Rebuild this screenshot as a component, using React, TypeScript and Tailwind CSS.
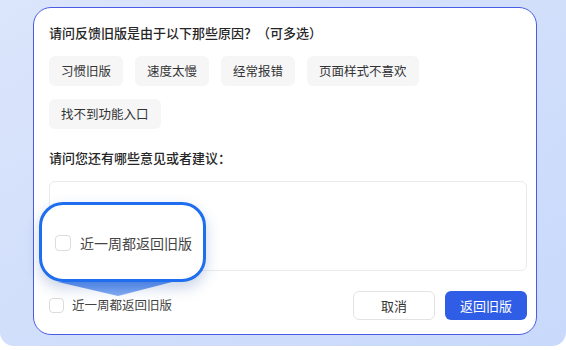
import React from "react";

const reasons = ["习惯旧版", "速度太慢", "经常报错", "页面样式不喜欢", "找不到功能入口"];

const Checkbox = ({ size = "w-[15px] h-[15px]" }: { size?: string }) => (
  <span className={`${size} shrink-0 rounded-[4px] border border-[#dcdcdc] bg-white`}></span>
);

export default function App() {
  return (
    <div
      className="w-[566px] h-[350px] bg-white overflow-hidden"
      style={{ fontFamily: '"Noto Sans CJK SC", "Noto Sans", sans-serif' }}
    >
      <div className="h-[346px] rounded-b-[14px] bg-gradient-to-br from-[#dbe5fb] to-[#c8d9fb] pt-[7px] pl-[33px]">
        {/* Card */}
        <div className="relative w-[504px] h-[328px] rounded-[18px] border-[1.5px] border-[#4a5ce6] bg-white pl-[15px] pr-[9px] pt-[16px]">
          <div className="text-[13px] leading-[18px] font-medium text-[#262626]">
            请问反馈旧版是由于以下那些原因？（可多选）
          </div>

          {/* Reasons */}
          <div className="mt-[14px] flex flex-wrap gap-x-[12px] gap-y-[13px] w-[400px]">
            {reasons.map((r) => (
              <div
                key={r}
                className="h-[30px] px-[12px] flex items-center rounded-[6px] bg-[#f6f6f7] text-[12.5px] text-[#333]"
              >
                {r}
              </div>
            ))}
          </div>

          <div className="mt-[21px] text-[13px] leading-[16px] font-medium text-[#262626]">
            请问您还有哪些意见或者建议：
          </div>

          <div className="mt-[15px] h-[90px] rounded-[6px] border border-[#ebebeb] bg-white"></div>

          {/* Footer */}
          <div className="mt-[20px] flex items-center">
            <div className="flex items-center gap-[8px]">
              <Checkbox />
              <span className="text-[12.5px] text-[#444]">近一周都返回旧版</span>
            </div>
            <div className="ml-auto flex gap-[10px]">
              <button className="w-[82px] h-[29px] rounded-[6px] border border-[#e3e3e3] bg-white text-[13px] text-[#333]">
                取消
              </button>
              <button className="w-[82px] h-[29px] rounded-[6px] bg-[#2f5de5] text-[13px] text-white">
                返回旧版
              </button>
            </div>
          </div>

          {/* Callout pointer */}
          <svg className="absolute left-[22px] top-[270px]" width="120" height="20" viewBox="0 0 120 20">
            <defs>
              <linearGradient id="ptr" x1="0" y1="0" x2="0" y2="1">
                <stop offset="0" stopColor="#3d7ef0" stopOpacity="0.85" />
                <stop offset="1" stopColor="#7aa6f2" stopOpacity="0.9" />
              </linearGradient>
            </defs>
            <polygon points="2,4 116,4 62,18" fill="url(#ptr)" />
          </svg>

          {/* Callout */}
          <div className="absolute left-[5px] top-[194px] w-[167px] h-[80px] rounded-[24px] border-[3px] border-[#1f6ef0] bg-white shadow-[0_6px_14px_rgba(40,80,160,0.25)] flex items-center pl-[13px] pt-[2px] gap-[9px]">
            <Checkbox size="w-[16px] h-[16px]" />
            <span className="text-[14px] text-[#444]">近一周都返回旧版</span>
          </div>
        </div>
      </div>
    </div>
  );
}
